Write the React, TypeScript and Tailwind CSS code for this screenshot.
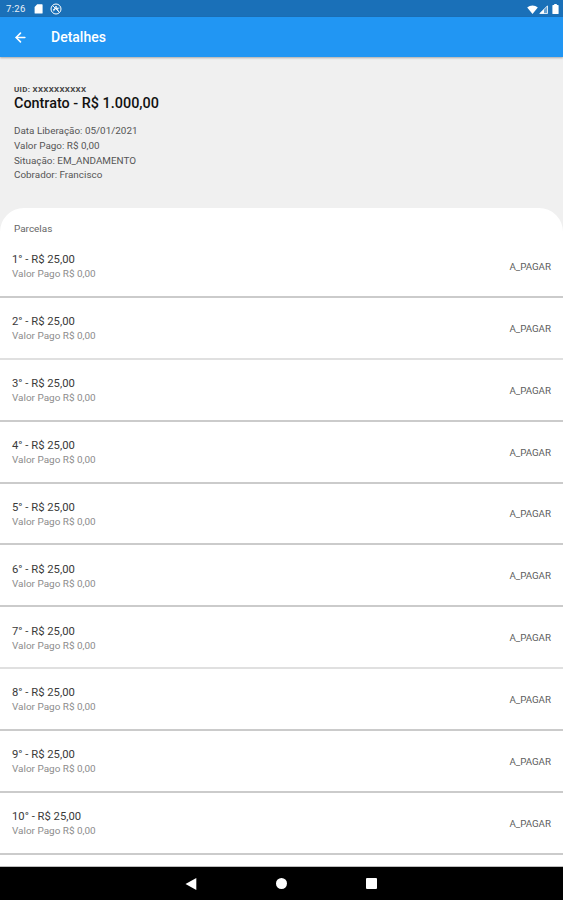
import { ArrowLeft } from "lucide-react";
import clsx from "clsx";

interface Installment {
  number: number;
  value: string;
  paid: string;
  status: string;
}

const installments: Installment[] = Array.from({ length: 10 }, (_, i) => ({
  number: i + 1,
  value: "R$ 25,00",
  paid: "R$ 0,00",
  status: "A_PAGAR",
}));

function StatusBar() {
  return (
    <div className="h-[17px] shrink-0 bg-[#1a70b8] flex items-center justify-between pl-[6px] pr-[4px] pt-px text-white">
      <div className="flex items-center">
        <span className="w-[28px] text-[9.5px] leading-none tracking-[0.3px] opacity-90">7:26</span>
        {/* SD card */}
        <svg className="w-[9px] h-[10px]" viewBox="0 0 9 10" fill="currentColor">
          <path d="M3.2 0.3H8a.6.6 0 0 1 .6.6v8a.6.6 0 0 1-.6.6H1.2a.6.6 0 0 1-.6-.6V3z" />
        </svg>
        <svg className="w-[12px] h-[12px] ml-[7px]" viewBox="0 0 12 12" fill="none" stroke="currentColor">
          <circle cx="6" cy="6" r="5" strokeWidth="1" />
          <path d="M2.6 2.6l7 7M3.6 8.2L6 3l2.4 5.2M3 6.8l3-1.2 3.4-.6" strokeWidth="0.9" />
        </svg>
      </div>
      <div className="flex items-center">
        <svg className="w-[11px] h-[9px]" viewBox="0 0 11 9" fill="currentColor">
          <path d="M0.2 2.4C3.2-.3 7.8-.3 10.8 2.4L5.5 9z" />
        </svg>
        <svg className="w-[9px] h-[9px] ml-px" viewBox="0 0 9 9">
          <path d="M8.5 0.8V8.5H0.8z" fill="white" fillOpacity="0.35" stroke="white" strokeWidth="0.8" />
          <path d="M5 4.3V8.5H0.8z" fill="white" />
        </svg>
        <svg className="w-[7px] h-[10px] ml-[4px]" viewBox="0 0 7 10" fill="currentColor">
          <path d="M2.2 0h2.6v1H6a.6.6 0 0 1 .6.6v7.8a.6.6 0 0 1-.6.6H1a.6.6 0 0 1-.6-.6V1.6A.6.6 0 0 1 1 1h1.2z" />
        </svg>
      </div>
    </div>
  );
}

function AppBar() {
  return (
    <header className="relative z-10 h-[40px] shrink-0 bg-[#2196f3] flex items-center pl-[13px] text-white shadow-[0_1px_2px_rgba(0,0,0,0.3)]">
      <ArrowLeft className="w-[15px] h-[15px]" strokeWidth={2.5} />
      <h1 className="ml-[23px] text-[14px] leading-none font-medium">Detalhes</h1>
    </header>
  );
}

function ContractSummary() {
  return (
    <section className="h-[151px] shrink-0 pl-[14px] pt-[28px]">
      <p className="text-[8px] leading-[9px] font-bold tracking-[0.3px] text-[#444]">UID: XXXXXXXXXX</p>
      <h2 className="text-[14.4px] leading-[20px] font-medium text-[#111]">Contrato - R$ 1.000,00</h2>
      <div className="mt-[10px] text-[9.9px] leading-[14.8px] text-[#555]">
        <p>Data Liberação: 05/01/2021</p>
        <p>Valor Pago: R$ 0,00</p>
        <p>Situação: EM_ANDAMENTO</p>
        <p>Cobrador: Francisco</p>
      </div>
    </section>
  );
}

function InstallmentRow({ item }: { item: Installment }) {
  return (
    <li
      className={clsx(
        "h-[61.9px] border-b-2 flex items-center justify-between px-[12px] pt-[1.6px]",
        item.number % 5 === 2 ? "border-[#e0e0e0]" : "border-[#cbcbcb]"
      )}
    >
      <div>
        <p className="text-[11.25px] leading-[15px] text-[#3a3a3a]">
          {item.number}° - {item.value}
        </p>
        <p className="text-[9.95px] leading-[14px] text-[#8c8c8c]">Valor Pago {item.paid}</p>
      </div>
      <span className="text-[9.75px] leading-none text-[#5c5c5c]">{item.status}</span>
    </li>
  );
}

function NavigationBar() {
  return (
    <nav className="h-[33px] shrink-0 bg-black flex items-center pl-[185px] text-white">
      <svg className="w-[12px] h-[14px]" viewBox="0 0 12 14" fill="currentColor">
        <path d="M0.5 7L11.3 1v12z" />
      </svg>
      <div className="ml-[79px] w-[11px] h-[11px] rounded-full bg-white" />
      <div className="ml-[79px] w-[11px] h-[11px] rounded-[1px] bg-white" />
    </nav>
  );
}

export default function App() {
  return (
    <div className="w-full h-screen flex flex-col overflow-hidden bg-[#f0f0f0] font-['Roboto',sans-serif]">
      <StatusBar />
      <AppBar />
      <ContractSummary />
      <main className="flex-1 min-h-0 overflow-hidden bg-white rounded-t-[24px] border-b border-[#bdbdbd]">
        <h3 className="h-[28px] pl-[14px] pt-[14px] text-[9.95px] leading-[14px] text-[#666]">Parcelas</h3>
        <ul>
          {installments.map((item) => (
            <InstallmentRow key={item.number} item={item} />
          ))}
        </ul>
      </main>
      <NavigationBar />
    </div>
  );
}
